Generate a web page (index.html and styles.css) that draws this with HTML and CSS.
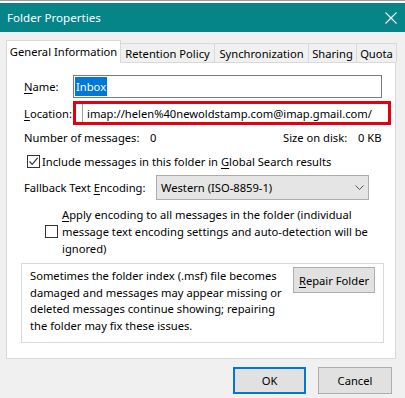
FILE: index.html
```html
<!DOCTYPE html>
<html lang="en">
<head>
  <meta charset="UTF-8">
  <title>Folder Properties</title>
  <link rel="stylesheet" href="styles.css">
</head>
<body>
  <div class="topstrip"></div>
  <div class="titlebar">
    <span class="title">Folder Properties</span>
    <svg class="close" width="12" height="12" viewBox="0 0 12 12">
      <path d="M0.5 0.5 L11.5 11.5 M11.5 0.5 L0.5 11.5" stroke="#fff" stroke-width="1.1" fill="none"/>
    </svg>
  </div>
  <div class="tabs">
    <div class="tab active">General Information</div>
    <div class="tab tab-retention">Retention Policy</div>
    <div class="tab tab-sync">Synchronization</div>
    <div class="tab tab-sharing">Sharing</div>
    <div class="tab tab-quota">Quota</div>
  </div>
  <div class="panel">
    <div class="field-row">
      <span class="field-label"><u>N</u>ame:</span>
      <div class="textbox"><span class="selected">Inbox</span></div>
    </div>
    <div class="field-row location-row">
      <span class="field-label"><u>L</u>ocation:</span>
      <div class="highlight">
        <div class="readonly">imap://helen%40newoldstamp.com@imap.gmail.com/</div>
      </div>
    </div>
    <div class="stats-row">
      <span class="stat-label">Number of messages:</span>
      <span class="stat-value">0</span>
      <span class="size-label">Size on disk:</span>
      <span class="size-value">0 KB</span>
    </div>
    <div class="check-row">
      <span class="checkbox">
        <svg width="11" height="11" viewBox="0 0 11 11">
          <path d="M1.5 5.5 L4.2 8.3 L9.6 1.8" stroke="#333" stroke-width="1.2" fill="none"/>
        </svg>
      </span>
      <span>Include messages in this folder in <u>G</u>lobal Search results</span>
    </div>
    <div class="encoding-row">
      <span class="encoding-label">Fallback Text <u>E</u>ncoding:</span>
      <div class="select">
        <span>Western (ISO-8859-1)</span>
        <svg width="9" height="5" viewBox="0 0 9 5">
          <path d="M0.5 0.5 L4.5 4.5 L8.5 0.5" stroke="#555" stroke-width="1" fill="none"/>
        </svg>
      </div>
    </div>
    <div class="apply-row">
      <span class="checkbox"></span>
      <span class="apply-text"><u>A</u>pply encoding to all messages in the folder (individual<br>message text encoding settings and auto-detection will be<br>ignored)</span>
    </div>
    <div class="repair-box">
      <p class="repair-text">Sometimes the folder index (.msf) file becomes<br>damaged and messages may appear missing or<br>deleted messages continue showing; repairing<br>the folder may fix these issues.</p>
      <button class="button repair-button"><u>R</u>epair Folder</button>
    </div>
  </div>
  <div class="footer">
    <button class="button ok-button">OK</button>
    <button class="button cancel-button">Cancel</button>
  </div>
</body>
</html>
```

FILE: styles.css
```css
body {
  font-family: "Noto Sans", "Open Sans", sans-serif;
  font-size: 11.2px;
  color: #000;
  margin: 0;
  padding: 0;
  background: #f0f0f0;
  width: 405px;
  height: 398px;
  overflow: hidden;
}
u {
  text-decoration-thickness: 1px;
  text-underline-offset: 2px;
}
.topstrip {
  height: 3px;
  background: #fff;
  border-top: 1px solid #9a9a9a;
  box-sizing: border-box;
}
.titlebar {
  height: 29px;
  background: #058587;
  color: #fff;
  display: flex;
  align-items: center;
  justify-content: space-between;
  padding: 0 8px 0 7px;
}
.title {
  font-size: 11.6px;
}
.close {
  margin-top: 1px;
}
.tabs {
  display: flex;
  align-items: flex-end;
  height: 22px;
  margin: 8px 0 0 6px;
}
.tab {
  box-sizing: border-box;
  height: 19px;
  border: 1px solid #d9d9d9;
  border-bottom: none;
  border-left: none;
  background: #f0f0f0;
  display: flex;
  align-items: center;
  justify-content: center;
  white-space: nowrap;
}
.tab.active {
  height: 23px;
  width: 115px;
  margin-bottom: -1px;
  border-left: 1px solid #d9d9d9;
  background: #fff;
  position: relative;
  z-index: 1;
  padding-bottom: 2px;
}
.tab-retention { width: 94px; }
.tab-sync { width: 94px; }
.tab-sharing { width: 48px; }
.tab-quota { width: 40px; }
.panel {
  box-sizing: border-box;
  height: 297px;
  margin: 0 9px 0 6px;
  background: #fff;
  border: 1px solid #d9d9d9;
  padding: 12px 0 0 17px;
}
.field-row {
  display: flex;
  align-items: center;
}
.field-label {
  width: 49px;
  flex-shrink: 0;
}
.textbox {
  box-sizing: border-box;
  width: 309px;
  height: 23px;
  border: 1px solid #7a7a7a;
  padding: 1px;
  display: flex;
  align-items: stretch;
}
.selected {
  background: #0078d7;
  color: #fff;
  padding: 0 1px;
  display: flex;
  align-items: center;
}
.location-row {
  margin-top: 3px;
}
.highlight {
  box-sizing: border-box;
  width: 318px;
  height: 24px;
  border: 3px solid #e3000f;
  padding-left: 6px;
  display: flex;
}
.readonly {
  flex: 1;
  border-left: 1px solid #a0a0a0;
  padding-left: 4px;
  display: flex;
  align-items: center;
  white-space: nowrap;
  overflow: hidden;
}
.stats-row {
  display: flex;
  height: 16px;
  line-height: 16px;
  margin-top: 5px;
  white-space: nowrap;
}
.stat-label {
  width: 126px;
}
.stat-value {
  width: 133px;
}
.size-label {
  width: 75px;
}
.check-row {
  display: flex;
  align-items: center;
  height: 16px;
  margin: 7px 0 0 3px;
  white-space: nowrap;
}
.checkbox {
  box-sizing: border-box;
  width: 13px;
  height: 13px;
  border: 1px solid #333;
  background: #fff;
  display: flex;
  align-items: center;
  justify-content: center;
  margin-right: 2px;
  flex-shrink: 0;
}
.encoding-row {
  display: flex;
  align-items: center;
  margin-top: 6px;
}
.encoding-label {
  width: 132px;
  flex-shrink: 0;
}
.select {
  box-sizing: border-box;
  width: 213px;
  height: 25px;
  background: #e5e5e5;
  border: 1px solid #acacac;
  display: flex;
  align-items: center;
  justify-content: space-between;
  padding: 0 4px 0 4px;
}
.apply-row {
  display: flex;
  align-items: center;
  margin: 6px 0 0 21px;
  white-space: nowrap;
}
.apply-row .checkbox {
  margin-right: 4px;
  margin-top: -1px;
}
.apply-text {
  line-height: 17px;
}
.repair-box {
  box-sizing: border-box;
  width: 363px;
  height: 80px;
  margin: 6px 0 0 -3px;
  border: 1px solid #d9d9d9;
  padding: 3px 8px 0 8px;
  display: flex;
  justify-content: space-between;
  align-items: flex-start;
}
.repair-text {
  margin: 1px 0 0;
  line-height: 16.7px;
  white-space: nowrap;
}
.button {
  font-family: inherit;
  font-size: 11.2px;
  color: #000;
  background: #e1e1e1;
  border: 1px solid #adadad;
  padding: 0;
  cursor: pointer;
}
.repair-button {
  width: 82px;
  height: 26px;
  flex-shrink: 0;
}
.footer {
  display: flex;
  justify-content: flex-end;
  gap: 12px;
  margin: 8px 13px 0 0;
}
.ok-button {
  width: 73px;
  height: 27px;
  border: 2px solid #0078d7;
}
.cancel-button {
  width: 74px;
  height: 27px;
}
```
